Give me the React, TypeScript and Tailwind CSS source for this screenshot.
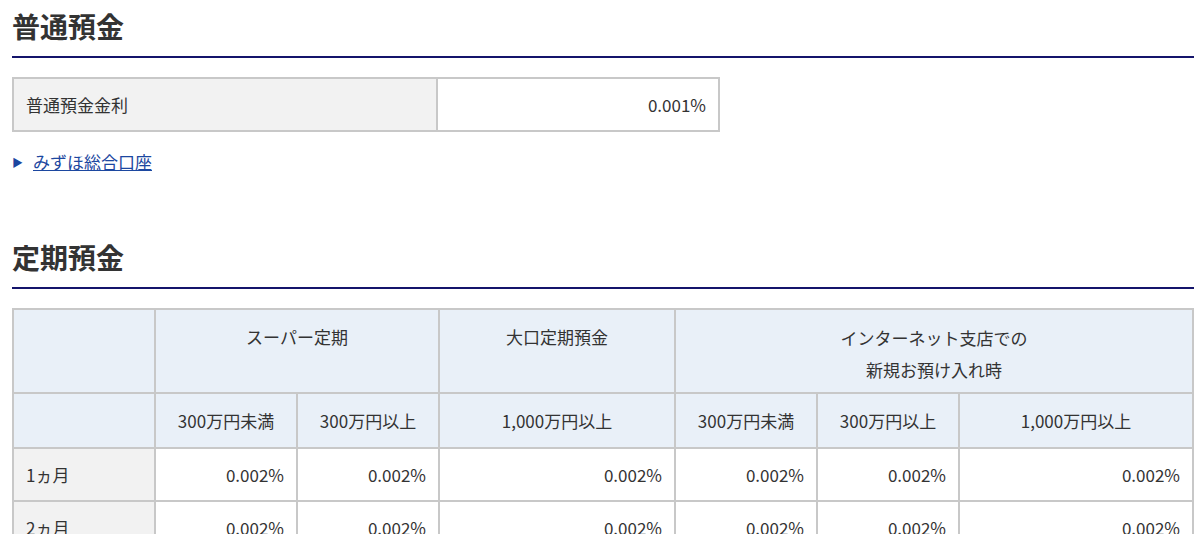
const font = { fontFamily: '"Noto Sans CJK JP", "Noto Sans", sans-serif' };

const rows = ['1ヵ月', '2ヵ月'];

export default function App() {
  const td = 'border-2 border-[#c8c8c8] px-3 text-right';
  const th = 'border-2 border-[#c8c8c8] bg-[#e9f0f8] font-normal text-center';
  return (
    <div className="pl-3 pr-[6px] text-[#333] text-[17px] leading-[30px]" style={font}>
      <h2 className="text-[28px] font-bold pt-[8px] pb-[12px] border-b-2 border-[#14146b] leading-[36px] w-[1182px]">普通預金</h2>
      <table className="mt-[19px] border-collapse w-[708px] table-fixed">
        <tbody>
          <tr className="h-[53px]">
            <td className="border-2 border-[#c8c8c8] bg-[#f2f2f2] px-3 w-[424px]">普通預金金利</td>
            <td className={td}>0.001%</td>
          </tr>
        </tbody>
      </table>
      <div className="mt-[15px] flex items-center gap-[10px]">
        <span className="text-[#1c47a0] text-[11px]">▶</span>
        <a className="text-[#1c47a0] underline">みずほ総合口座</a>
      </div>
      <h2 className="mt-[62px] text-[28px] font-bold pb-[12px] border-b-2 border-[#14146b] leading-[36px] w-[1182px]">定期預金</h2>
      <table className="mt-[19px] border-collapse w-[1182px] table-fixed">
        <colgroup>
          <col className="w-[142px]" /><col className="w-[142px]" /><col className="w-[142px]" />
          <col className="w-[236px]" /><col className="w-[142px]" /><col className="w-[142px]" /><col />
        </colgroup>
        <thead>
          <tr className="h-[84px]">
            <th className={th}></th>
            <th colSpan={2} className={th + ' align-top pt-[12px]'}>スーパー定期</th>
            <th className={th + ' align-top pt-[12px]'}>大口定期預金</th>
            <th colSpan={3} className={th + ' align-top pt-[12px] leading-[32px]'}>インターネット支店での<br />新規お預け入れ時</th>
          </tr>
          <tr className="h-[55px]">
            <th className={th}></th>
            <th className={th}>300万円未満</th>
            <th className={th}>300万円以上</th>
            <th className={th}>1,000万円以上</th>
            <th className={th}>300万円未満</th>
            <th className={th}>300万円以上</th>
            <th className={th}>1,000万円以上</th>
          </tr>
        </thead>
        <tbody>
          {rows.map((r) => (
            <tr key={r} className="h-[53px]">
              <td className="border-2 border-[#c8c8c8] bg-[#f2f2f2] px-3">{r}</td>
              {[0, 1, 2, 3, 4, 5].map((i) => <td key={i} className={td}>0.002%</td>)}
            </tr>
          ))}
        </tbody>
      </table>
    </div>
  );
}
